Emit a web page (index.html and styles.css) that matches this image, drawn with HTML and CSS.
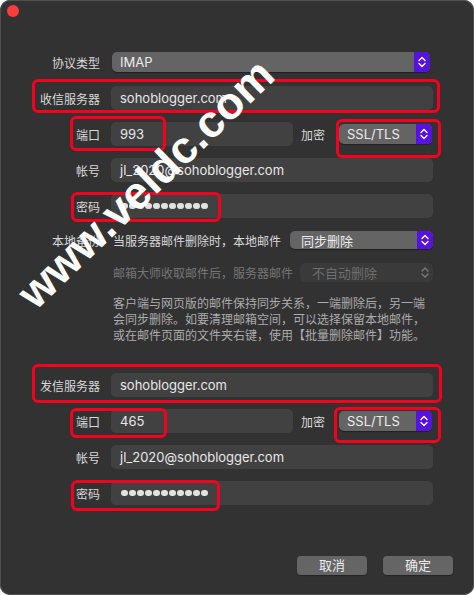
FILE: index.html
```html
<!DOCTYPE html>
<html lang="zh-CN">
<head>
    <meta charset="UTF-8">
    <meta name="viewport" content="width=device-width, initial-scale=1.0">
    <title>账户设置</title>
    <link rel="stylesheet" href="styles.css">
</head>
<body>
    <div class="window">
        <div class="titlebar"><span class="close"></span></div>

        <div class="form">
            <label class="label">协议类型</label>
            <div class="popup popup-protocol">
                <span class="value">IMAP</span>
                <span class="arrows"><svg width="16" height="20" viewBox="0 0 16 20"><path d="M5 8.5 8 5.5 11 8.5M5 11.5 8 14.5 11 11.5"/></svg></span>
            </div>

            <!-- incoming server -->
            <label class="label">收信服务器</label>
            <div class="field">sohoblogger.com</div>

            <label class="label">端口</label>
            <div class="port-line">
                <div class="field port">993</div>
                <span class="enc-label">加密</span>
                <div class="popup popup-enc">
                    <span class="value">SSL/TLS</span>
                    <span class="arrows"><svg width="16" height="20" viewBox="0 0 16 20"><path d="M5 8.5 8 5.5 11 8.5M5 11.5 8 14.5 11 11.5"/></svg></span>
                </div>
            </div>

            <label class="label">帐号</label>
            <div class="field">jl_2020@sohoblogger.com</div>

            <label class="label">密码</label>
            <div class="field dots"><i></i><i></i><i></i><i></i><i></i><i></i><i></i><i></i><i></i><i></i><i></i></div>

            <label class="label label-short">本地备份</label>
            <div class="option-line">
                <span class="option-text">当服务器邮件删除时，本地邮件</span>
                <div class="popup popup-sync">
                    <span class="value">同步删除</span>
                    <span class="arrows"><svg width="16" height="18" viewBox="0 0 16 18"><path d="M5 7.5 8 4.5 11 7.5M5 10.5 8 13.5 11 10.5"/></svg></span>
                </div>
            </div>

            <span></span>
            <div class="option-line option-disabled">
                <span class="option-text">邮箱大师收取邮件后，服务器邮件</span>
                <div class="popup popup-off">
                    <span class="value">不自动删除</span>
                    <span class="arrows"><svg width="16" height="19" viewBox="0 0 16 19"><path d="M5 8 8 5 11 8M5 11 8 14 11 11"/></svg></span>
                </div>
            </div>

            <span></span>
            <p class="note">客户端与网页版的邮件保持同步关系，一端删除后，另一端<br>会同步删除。如要清理邮箱空间，可以选择保留本地邮件，<br>或在邮件页面的文件夹右键，使用【批量删除邮件】功能。</p>

            <!-- outgoing server -->
            <label class="label">发信服务器</label>
            <div class="field">sohoblogger.com</div>

            <label class="label">端口</label>
            <div class="port-line">
                <div class="field port">465</div>
                <span class="enc-label">加密</span>
                <div class="popup popup-enc">
                    <span class="value">SSL/TLS</span>
                    <span class="arrows"><svg width="16" height="20" viewBox="0 0 16 20"><path d="M5 8.5 8 5.5 11 8.5M5 11.5 8 14.5 11 11.5"/></svg></span>
                </div>
            </div>

            <label class="label">帐号</label>
            <div class="field">jl_2020@sohoblogger.com</div>

            <label class="label">密码</label>
            <div class="field dots"><i></i><i></i><i></i><i></i><i></i><i></i><i></i><i></i><i></i><i></i><i></i></div>
        </div>

        <div class="buttons">
            <button type="button">取消</button>
            <button type="button">确定</button>
        </div>

        <!-- red highlight frames -->
        <span class="mark mark-in-host"></span>
        <span class="mark mark-in-port"></span>
        <span class="mark mark-in-enc"></span>
        <span class="mark mark-in-pass"></span>
        <span class="mark mark-out-host"></span>
        <span class="mark mark-out-port"></span>
        <span class="mark mark-out-enc"></span>
        <span class="mark mark-out-pass"></span>

        <div class="stamp">www.veldc.com</div>
    </div>
</body>
</html>
```

FILE: styles.css
```css
body {
    margin: 0;
    background-color: #fff;
    font-family: Inter, "Noto Sans CJK SC", sans-serif;
}

.window {
    position: relative;
    width: 474px;
    height: 595px;
    box-sizing: border-box;
    background-color: #323232;
    border-radius: 10px;
    box-shadow: inset 0 0 0 1px #4f4f4f;
    overflow: hidden;
}

.titlebar {
    height: 50px;
}

.close {
    display: block;
    position: relative;
    left: 7px;
    top: 5px;
    width: 12px;
    height: 12px;
    border-radius: 50%;
    background-color: #fc3d39;
}

.form {
    display: grid;
    grid-template-columns: 100px 322px;
    column-gap: 11px;
    row-gap: 12px;
    align-items: center;
}

.label {
    text-align: right;
    font-size: 12px;
    color: #d9d9d9;
}

.field {
    height: 24px;
    line-height: 24px;
    box-sizing: border-box;
    padding-left: 9px;
    background-color: #414141;
    border-radius: 5px;
    font-size: 13px;
    color: #e8e8e8;
}

.dots {
    display: flex;
    align-items: center;
    gap: 1.5px;
    padding-left: 10px;
}

.dots i {
    width: 6.5px;
    height: 6.5px;
    border-radius: 50%;
    background-color: #e2e2e2;
}

.port-line {
    display: flex;
    align-items: center;
}

.port {
    width: 182px;
}

.enc-label {
    margin: 0 14px 0 8px;
    font-size: 12px;
    color: #d9d9d9;
}

.popup {
    display: flex;
    align-items: center;
    height: 20px;
    border-radius: 5px;
    background-color: #646464;
    box-shadow: 0 1px 1px rgba(0,0,0,0.35);
    overflow: hidden;
    font-size: 13px;
    color: #ececec;
}

.popup .value {
    flex: 1;
    padding-left: 8px;
}

.popup .arrows {
    display: flex;
    width: 16px;
    height: 100%;
    background-color: #5512e0;
}

.popup svg path {
    fill: none;
    stroke: #fff;
    stroke-width: 1.4;
    stroke-linecap: round;
    stroke-linejoin: round;
}

.popup-protocol {
    width: 318px;
    margin: 2px 0 2px 1px;
}

.popup-enc {
    width: 93px;
}

.option-line {
    display: flex;
    align-items: center;
    height: 20px;
    padding-left: 2px;
}

.option-text {
    font-size: 12px;
    color: #d9d9d9;
}

.popup-sync {
    height: 18px;
    width: 143px;
    margin-left: auto;
}

.popup-sync .value {
    padding-left: 11px;
}

.option-disabled .option-text {
    color: #767676;
}

.popup-off {
    height: 19px;
    width: 133px;
    margin-left: auto;
    background-color: #3a3a3a;
    box-shadow: none;
    color: #6e6e6e;
}

.popup-off .value {
    padding-left: 12px;
}

.popup-off .arrows {
    background-color: transparent;
}

.popup-off svg path {
    stroke: #7a7a7a;
}

.note {
    margin: 2px 0 17px;
    padding-left: 2px;
    font-size: 12px;
    line-height: 16px;
    color: #acacac;
}

.buttons {
    display: flex;
    justify-content: flex-end;
    gap: 16px;
    margin-top: 51px;
    padding-right: 21px;
}

button {
    width: 70px;
    height: 19px;
    padding: 0;
    border: none;
    border-radius: 4px;
    background-color: #656565;
    box-shadow: 0 1px 1px rgba(0,0,0,0.3);
    font-family: inherit;
    font-size: 13px;
    line-height: 19px;
    color: #ececec;
}

/* red frames drawn over the form */
.mark {
    position: absolute;
    box-sizing: border-box;
    border: 3px solid #f7001e;
    border-radius: 6px;
}

.mark-in-host { left: 32px; top: 79px; width: 408px; height: 34px; }
.mark-in-port { left: 70px; top: 116px; width: 96px; height: 35px; }
.mark-in-enc { left: 336px; top: 119px; width: 105px; height: 39px; }
.mark-in-pass { left: 71px; top: 192px; width: 150px; height: 30px; }
.mark-out-host { left: 32px; top: 364px; width: 410px; height: 39px; }
.mark-out-port { left: 70px; top: 408px; width: 97px; height: 30px; }
.mark-out-enc { left: 334px; top: 407px; width: 107px; height: 36px; }
.mark-out-pass { left: 71px; top: 480px; width: 149px; height: 31px; }

.stamp {
    position: absolute;
    left: 9px;
    top: 284px;
    transform: rotate(-44deg);
    transform-origin: 0 0;
    white-space: nowrap;
    font-family: "Liberation Sans", sans-serif;
    font-weight: bold;
    font-size: 45px;
    line-height: 1;
    color: #fff;
}
```
